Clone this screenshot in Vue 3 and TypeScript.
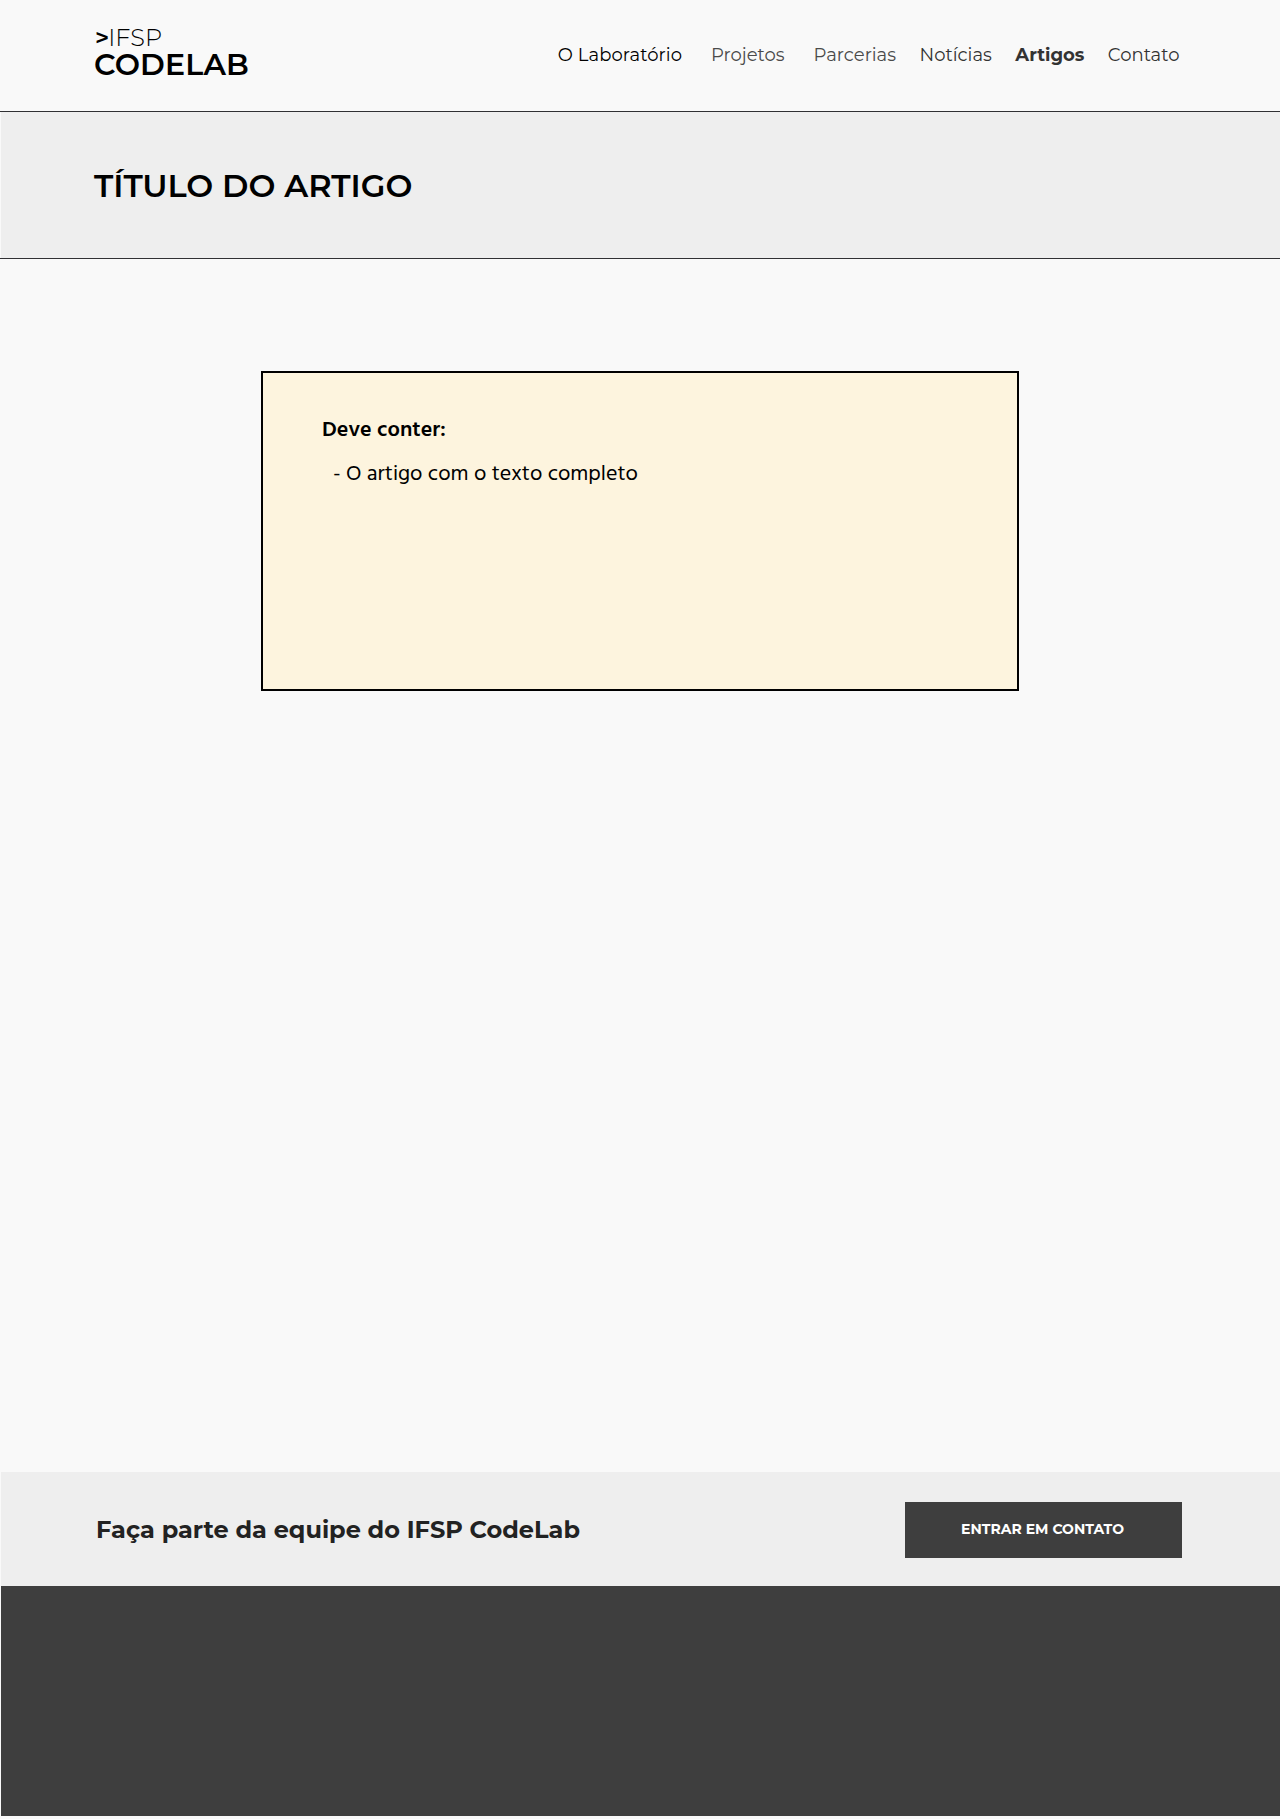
<script setup lang="ts">
interface NavItem {
  label: string
  tone?: string
}

const navItems: NavItem[] = [
  { label: 'O Laboratório', tone: 'dark' },
  { label: 'Projetos', tone: 'soft' },
  { label: 'Parcerias', tone: 'soft' },
  { label: 'Notícias' },
  { label: 'Artigos', tone: 'active' },
  { label: 'Contato' },
]
</script>

<template>
  <div class="page">
    <header class="header">
      <a class="logo">
        <span class="logo-top"><b class="chevron">&gt;</b>IFSP</span>
        <span class="logo-name">CODELAB</span>
      </a>
      <nav class="nav">
        <a v-for="item in navItems" :key="item.label" class="link" :class="item.tone">{{ item.label }}</a>
      </nav>
    </header>

    <section class="banner">
      <h1 class="title">TÍTULO DO ARTIGO</h1>
    </section>

    <main class="content">
      <article class="card">
        <h2 class="card-title">Deve conter:</h2>
        <p class="card-line">- O artigo com o texto completo</p>
      </article>
    </main>

    <section class="cta">
      <h2 class="cta-title">Faça parte da equipe do IFSP CodeLab</h2>
      <a class="button">ENTRAR EM CONTATO</a>
    </section>
    <footer class="footer"></footer>
  </div>
</template>

<style>
body {
  margin: 0;
  background: #f9f9f9;
}
</style>

<style scoped>
.page {
  box-sizing: border-box;
  width: 1280px;
  height: 1819px;
  display: flex;
  flex-direction: column;
  background: #f9f9f9;
  font-family: Montserrat, Inter, "Liberation Sans", sans-serif;
  color: #000;
  white-space: nowrap;
}
.header {
  box-sizing: border-box;
  height: 112px;
  border-bottom: 1px solid #303033;
  display: flex;
  justify-content: space-between;
  align-items: flex-start;
  padding: 0 100.5px 0 94px;
}
.logo {
  display: flex;
  flex-direction: column;
  align-items: flex-start;
  padding-top: 24px;
}
.logo-top {
  height: 28px;
  font-size: 24px;
  font-weight: 300;
  line-height: 28px;
  padding-left: 1px;
}
.chevron {
  font-weight: 600;
  margin-right: -1px;
}
.logo-name {
  font-size: 30px;
  font-weight: 600;
  line-height: 26px;
  letter-spacing: 0.15px;
}
.nav {
  display: flex;
  padding-top: 43px;
  font-size: 18px;
  line-height: 24px;
  font-weight: 400;
  color: #333;
}
.link {
  margin-left: 23.5px;
}
.link.dark {
  color: #000;
  letter-spacing: 0.08px;
}
.link.soft {
  color: #4a4a4a;
  margin-left: 29px;
}
.link.active {
  font-weight: 700;
}
.banner {
  box-sizing: border-box;
  height: 147px;
  background: linear-gradient(to right, #f9f9f9 1px, #eee 1px);
  border-bottom: 1px solid #303033;
  padding: 54px 94px 0;
}
.title {
  margin: 0;
  font-size: 32px;
  font-weight: 600;
  line-height: 40px;
}
.content {
  height: 1213px;
  display: flex;
  justify-content: center;
  align-items: flex-start;
}
.card {
  box-sizing: border-box;
  width: 758px;
  height: 320px;
  margin-top: 112px;
  border: 2px solid #000;
  background: #fdf4de;
  padding: 42px 59px;
  display: flex;
  flex-direction: column;
  align-items: flex-start;
  font-family: Hind, "Noto Sans", sans-serif;
  font-size: 22px;
  line-height: 32px;
}
.card-title {
  margin: 0 0 12px;
  font-size: 22px;
  font-weight: 600;
}
.card-line {
  margin: 0 0 0 11px;
}
.cta {
  box-sizing: border-box;
  height: 114px;
  margin-left: 1px;
  background: #eee;
  display: flex;
  justify-content: space-between;
  align-items: center;
  padding: 2px 98px 0 95px;
}
.cta-title {
  margin: 0;
  font-size: 24px;
  font-weight: 700;
  line-height: 32px;
  color: #222;
}
.button {
  box-sizing: border-box;
  width: 277px;
  height: 56px;
  padding: 0 2px 2px 0;
  display: flex;
  align-items: center;
  justify-content: center;
  background: #3e3e3e;
  color: #fff;
  font-size: 14px;
  font-weight: 700;
  line-height: 20px;
}
.footer {
  height: 230px;
  margin-left: 1px;
  background: #3e3e3e;
}
</style>
